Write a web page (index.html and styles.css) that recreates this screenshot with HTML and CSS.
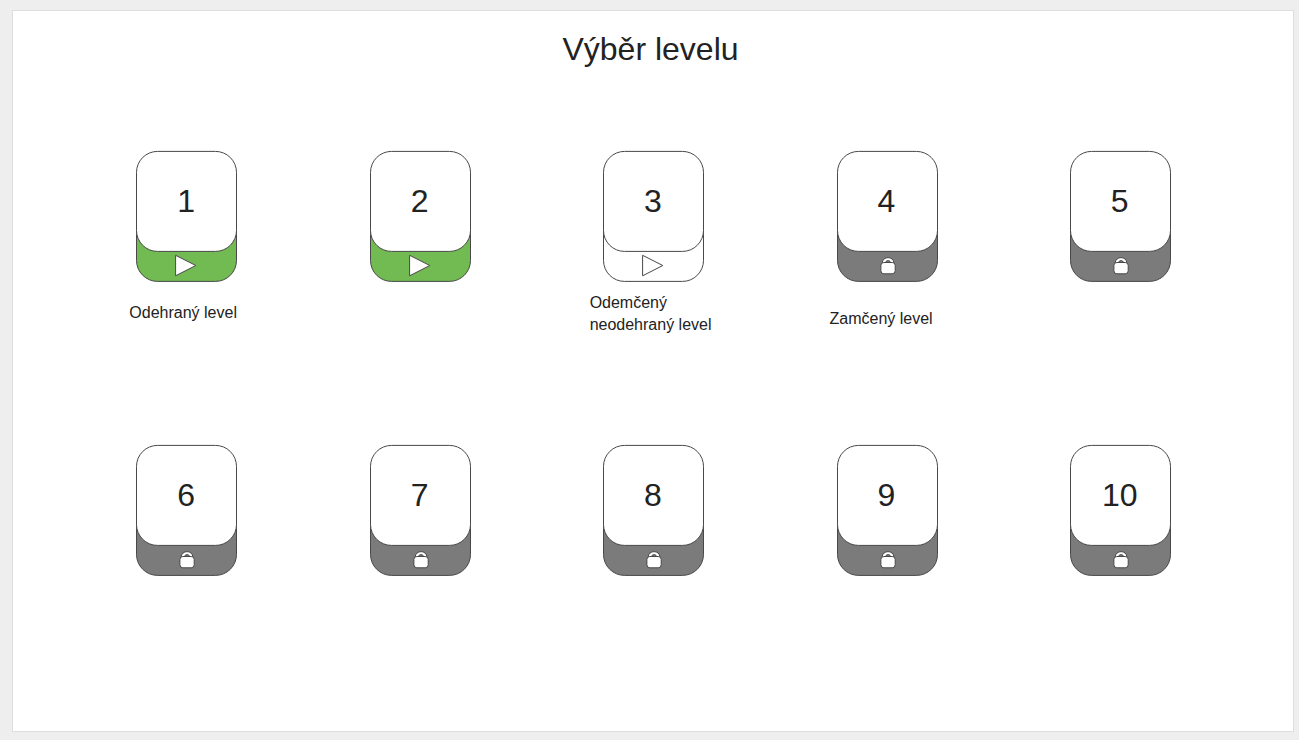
FILE: index.html
```
<!DOCTYPE html>
<html lang="cs">
<head>
<meta charset="utf-8">
<title>Výběr levelu</title>
<link rel="stylesheet" href="styles.css">
</head>
<body>
<svg class="defs" width="0" height="0" aria-hidden="true">
  <symbol id="base" viewBox="0 0 102 132">
    <path d="M.5 50V109.400A21 21 0 0 0 21.500 130.400H79.500A21 21 0 0 0 100.500 109.400V50"/>
    <rect class="face" x=".5" y=".4" width="100" height="100" rx="21"/>
  </symbol>
  <symbol id="play" viewBox="0 0 102 132">
    <path class="icon" d="M39.600 104.300 59.800 114.500 39.600 124.800Z"/>
  </symbol>
  <symbol id="lock" viewBox="0 0 102 132">
    <path class="icon" d="M45.200 112.500V112.200C45.200 104.800 56.900 104.800 56.900 112.200V112.500H53.900C53.900 108.700 48.200 108.700 48.200 112.500Z"/>
    <rect class="icon" x="43.900" y="111.500" width="14.300" height="11.300" rx="3"/>
  </symbol>
</svg>
<main class="screen">
  <h1 class="title">Výběr levelu</h1>
  <div class="levels">
    <div class="level played"><div class="card"><svg class="shape"><use href="#base"/><use href="#play"/></svg><span class="number">1</span></div><p class="caption">Odehraný level</p></div>
    <div class="level played"><div class="card"><svg class="shape"><use href="#base"/><use href="#play"/></svg><span class="number">2</span></div></div>
    <div class="level open"><div class="card"><svg class="shape"><use href="#base"/><use href="#play"/></svg><span class="number">3</span></div><p class="caption">Odemčený<br>neodehraný level</p></div>
    <div class="level locked"><div class="card"><svg class="shape"><use href="#base"/><use href="#lock"/></svg><span class="number">4</span></div><p class="caption">Zamčený level</p></div>
    <div class="level locked"><div class="card"><svg class="shape"><use href="#base"/><use href="#lock"/></svg><span class="number">5</span></div></div>
    <div class="level locked"><div class="card"><svg class="shape"><use href="#base"/><use href="#lock"/></svg><span class="number">6</span></div></div>
    <div class="level locked"><div class="card"><svg class="shape"><use href="#base"/><use href="#lock"/></svg><span class="number">7</span></div></div>
    <div class="level locked"><div class="card"><svg class="shape"><use href="#base"/><use href="#lock"/></svg><span class="number">8</span></div></div>
    <div class="level locked"><div class="card"><svg class="shape"><use href="#base"/><use href="#lock"/></svg><span class="number">9</span></div></div>
    <div class="level locked"><div class="card"><svg class="shape"><use href="#base"/><use href="#lock"/></svg><span class="number">10</span></div></div>
  </div>
</main>
</body>
</html>
```
FILE: styles.css
```
* { box-sizing: border-box; }
body {
  margin: 0;
  height: 740px;
  padding: 10px 5px 8px 12px;
  overflow: hidden;
  background: #eee;
  color: #222;
  font-family: "Liberation Sans", Arial, sans-serif;
}
.defs { display: block; }
.screen {
  height: 722px;
  background: #fff;
  border: 1px solid #dedede;
}
.title {
  margin: 20px 0 0;
  padding-right: 5px;
  font-size: 32px;
  line-height: 36px;
  font-weight: 400;
  text-align: center;
}
.levels {
  display: grid;
  grid-template-columns: repeat(5, 233.4px);
  grid-auto-rows: 293.6px;
  margin-top: 84px;
  padding-left: 123.350px;
  width: 1291px;
}
.card { display: grid; width: 102px; height: 132px; }
.shape {
  grid-area: 1 / 1;
  display: block;
  width: 102px;
  height: 132px;
  overflow: visible;
  stroke: #484848;
  stroke-width: 1;
}
.shape use { width: 102px; height: 132px; }
#base, #play, #lock { overflow: visible; }
.number {
  grid-area: 1 / 1;
  padding: 32px 2.400px 0 0;
  font-size: 32px;
  line-height: 36px;
  text-align: center;
}
.face, .icon { fill: #fff; }
.played .shape { fill: #72bb53; }
.open .shape { fill: #fff; }
.locked .shape { fill: #7b7b7b; }
.caption {
  margin: 19px 0 0 -7px;
  font-size: 16px;
  line-height: 22px;
  white-space: nowrap;
}
.open .caption { margin: 9px 0 0 -13.500px; }
.locked .caption { margin-top: 25px; }
```
